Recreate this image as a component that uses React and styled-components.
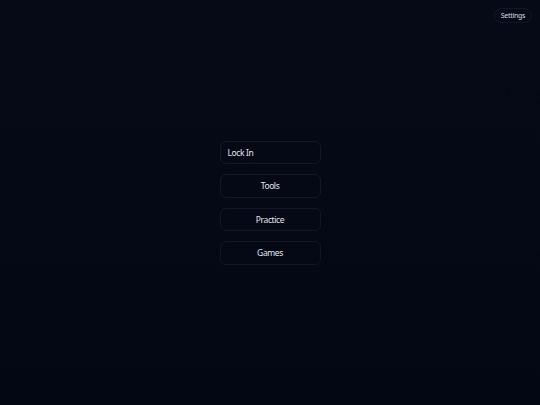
import React from "react";
import styled, { createGlobalStyle } from "styled-components";

const GlobalStyle = createGlobalStyle`
  html, body, #root {
    margin: 0;
    padding: 0;
    height: 100%;
  }
  body {
    background: #050915;
    font-family: "Noto Sans", "Open Sans", sans-serif;
    color: #dfe3ea;
  }
`;

const Page = styled.div`
  position: relative;
  height: 100%;
  display: flex;
  align-items: center;
  justify-content: center;
  background: linear-gradient(180deg, #060a17 0%, #050916 50%, #030713 100%);
`;

const TopBar = styled.div`
  position: absolute;
  top: 8px;
  right: 8px;
  display: flex;
`;

const SettingsButton = styled.button`
  height: 15px;
  padding: 0 6px;
  border-radius: 999px;
  border: 1px solid rgba(255, 255, 255, 0.06);
  background: transparent;
  color: #d6dae2;
  font-family: inherit;
  font-size: 7px;
  line-height: 1;
  letter-spacing: -0.3px;
  cursor: pointer;
`;

const Menu = styled.nav`
  display: flex;
  flex-direction: column;
  gap: 10px;
  width: 101px;
`;

const MenuButton = styled.button`
  height: 23.5px;
  padding: 0 7px;
  border-radius: 6px;
  border: 1px solid rgba(255, 255, 255, 0.06);
  background: transparent;
  color: #e2e6ed;
  font-family: inherit;
  font-size: 8.5px;
  letter-spacing: -0.4px;
  text-align: ${(p) => (p.$align === "left" ? "left" : "center")};
  cursor: pointer;
`;

const items = [
  { label: "Lock In", align: "left" },
  { label: "Tools" },
  { label: "Practice" },
  { label: "Games" },
];

export default function App() {
  return (
    <>
      <GlobalStyle />
      <Page>
        <TopBar>
          <SettingsButton>Settings</SettingsButton>
        </TopBar>
        <Menu>
          {items.map((item) => (
            <MenuButton key={item.label} $align={item.align}>
              {item.label}
            </MenuButton>
          ))}
        </Menu>
      </Page>
    </>
  );
}
